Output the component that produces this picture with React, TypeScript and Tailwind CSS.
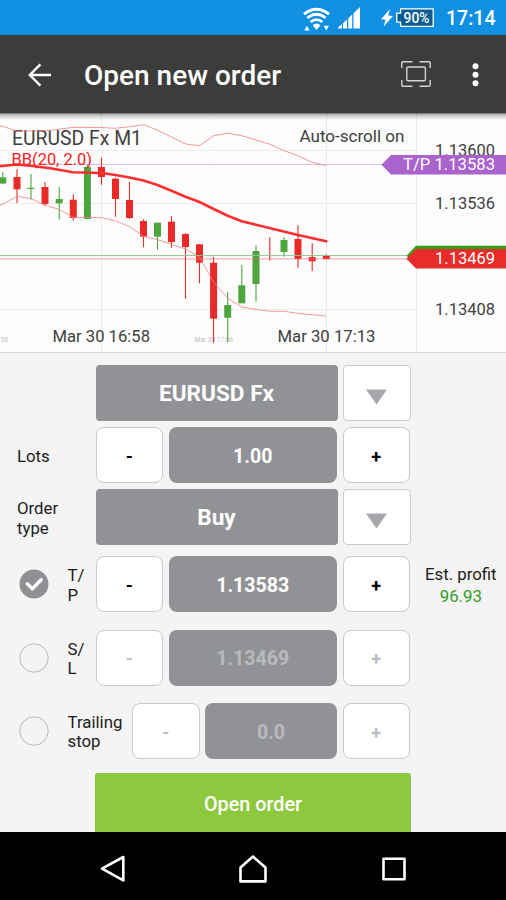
import React from 'react';

// ── Types ──────────────────────────────────────────────────────────────────
interface Candle {
  x: number;
  high: number;
  low: number;
  top: number;
  bottom: number;
  up?: boolean;
}

// ── Chart data ─────────────────────────────────────────────────────────────
const candles: Candle[] = [
  { x: 2.8, high: 172, low: 183.7, top: 177.3, bottom: 183.5, up: true },
  { x: 17, high: 169, low: 203, top: 177, bottom: 189.3 },
  { x: 31, high: 174, low: 199.5, top: 187.8, bottom: 189, up: true },
  { x: 45, high: 182, low: 206, top: 187, bottom: 204 },
  { x: 59.2, high: 187, low: 219.5, top: 199, bottom: 203.3, up: true },
  { x: 73.3, high: 194.3, low: 220.5, top: 199.7, bottom: 218 },
  { x: 87.4, high: 165, low: 219, top: 167, bottom: 219, up: true },
  { x: 101.5, high: 157.7, low: 184.7, top: 167, bottom: 177 },
  { x: 115.5, high: 177.7, low: 216.7, top: 178.7, bottom: 199 },
  { x: 129.5, high: 182, low: 219, top: 200, bottom: 218 },
  { x: 143.5, high: 219.3, low: 247.3, top: 221, bottom: 236.7 },
  { x: 157.5, high: 222.7, low: 250, top: 222.7, bottom: 236.7, up: true },
  { x: 171.5, high: 216.3, low: 247.7, top: 221.7, bottom: 242 },
  { x: 185.5, high: 233.3, low: 298.7, top: 234, bottom: 247 },
  { x: 199.5, high: 244, low: 283.3, top: 244.3, bottom: 262.7 },
  { x: 213.6, high: 256.7, low: 342.7, top: 262.7, bottom: 318.7 },
  { x: 227.7, high: 292, low: 342, top: 305, bottom: 317.7, up: true },
  { x: 241.8, high: 265, low: 303.3, top: 285.3, bottom: 303.3, up: true },
  { x: 256, high: 245.3, low: 301.3, top: 251, bottom: 284, up: true },
  { x: 269.8, high: 237.3, low: 260.7, top: 250, bottom: 250 },
  { x: 284, high: 237.3, low: 256.7, top: 240, bottom: 252, up: true },
  { x: 298, high: 225, low: 267.7, top: 239, bottom: 259 },
  { x: 312.2, high: 243.3, low: 271, top: 257, bottom: 261.3 },
  { x: 326.3, high: 254.3, low: 259.5, top: 256, bottom: 259 },
];

const upperBand =
  '0,126 3,126.3 17,131.3 50,130.5 73,127.3 101.5,127.5 115.5,128.3 129.5,126.7 143.5,124.7 157.5,130.3 171.5,137 185.5,144 199.5,145.7 213.6,135.7 227.7,133.3 241.8,135.7 255,139.7 270,144.3 284,150.7 298,155.7 312,162.3 326,165.5';
const middleBand =
  '0,166.3 17,164.5 33,166 50,168.3 73,172.2 101.5,173 115.5,175 129.5,177.5 143.5,180.5 157.5,185 171.5,190.7 185.5,196.7 199.5,202 213.6,209 227.7,215.7 241.8,221.3 256,224.7 298,234.9 327.3,241.4';
const lowerBand =
  '0,205 3,204.3 17,196.3 31,198.7 45,205.3 59,209.3 73,217.3 101.5,217.7 115.5,220.7 129.5,226.7 143.5,236.3 157.5,239.7 171.5,244.3 185.5,249 199.5,257 213.6,282.3 227.7,298.3 241.8,307 255,309.3 270,311.3 284,311.3 298,313.3 326,316';

// ── Status bar ─────────────────────────────────────────────────────────────
const StatusBar: React.FC = () => (
  <div className="flex h-[35px] items-center justify-end bg-[#118fe0] pr-[11px] text-white">
    <svg width="27" height="24" viewBox="0 0 27 24" className="mt-0.5 mr-2" fill="none" stroke="white">
      <path d="M1 7.2Q13.5-2.8 26 7.2" strokeWidth="3" />
      <path d="M4.3 11Q13.5 3.6 22.7 11" strokeWidth="2.8" />
      <path d="M7.6 14.9Q13.5 10.2 19.4 14.9" strokeWidth="2.7" />
      <path d="M9.6 18.2Q13.5 15 17.4 18.2L13.5 23z" fill="white" stroke="none" />
      <path d="M1.3 23.5l2.6-4.8 2.6 4.8zM20.7 18.7h5.2l-2.6 4.8z" fill="white" stroke="none" />
    </svg>
    <svg width="23" height="22" viewBox="0 0 23 22" className="mr-5" fill="white">
      <path d="M0 21.5v-1L4 17v4.5zM5 21.5v-5.3l4-3.8v9.1zM10.3 21.5V11.2l3.9-3.8v14.1zM15.5 21.5V6.3L22 0v21.5z" />
    </svg>
    <svg width="12" height="18" viewBox="0 0 12 18" className="mr-[3px]" fill="white">
      <path d="M9 0L0 10.2l4.6.5L2.7 17.5 12 7l-4.8-.5z" />
    </svg>
    <div className="flex items-center">
      <svg width="38" height="20" viewBox="0 0 38 20" stroke="white" strokeWidth="1.3">
        <path d="M4.6.9H37.2V18.4H4.6V14.2H.8V5.2H4.6z" fill="#0b5c91" />
        <text x="20.6" y="15.2" textAnchor="middle" textLength="26" lengthAdjust="spacingAndGlyphs" stroke="none" fill="white" className="text-[15.5px] font-medium">
          90%
        </text>
      </svg>
    </div>
    <span className="mt-[3px] ml-3 w-[49px] whitespace-nowrap text-[19.5px] leading-none font-medium">17:14</span>
  </div>
);

// ── Toolbar ────────────────────────────────────────────────────────────────
const Toolbar: React.FC = () => (
  <div className="flex h-[78px] items-center bg-[#3c3d3b] pr-[27.5px] pl-7 text-white">
    <svg width="24" height="24" viewBox="0 0 24 24" fill="none" stroke="white" strokeWidth="2.4" className="mt-px">
      <path d="M23 12H2M12.4 1.4L1.8 12l10.6 10.6" />
    </svg>
    <h1 className="mt-[3px] ml-8 grow whitespace-nowrap text-[28px] leading-none font-medium">Open new order</h1>
    <svg width="30" height="26" viewBox="0 0 30 26" fill="none" stroke="#d2d3d6" strokeWidth="1.4" className="mr-[40.5px]">
      <path d="M.8 7V2Q.8.8 2 .8H11.5M18.5.8H28Q29.2.8 29.2 2V7M29.2 19v5q0 1.2-1.2 1.2H18.5M11.5 25.2H2Q.8 25.2.8 24V19" />
      <rect x="5.8" y="6" width="18.6" height="13.8" rx="1.3" />
    </svg>
    <svg width="7" height="24" viewBox="0 0 7 24" fill="white" className="mt-px">
      <circle cx="3.5" cy="3.3" r="3" />
      <circle cx="3.5" cy="11.8" r="3" />
      <circle cx="3.5" cy="20.3" r="3" />
    </svg>
  </div>
);

// ── Chart: candlesticks with Bollinger bands and price tags ────────────────
const Chart: React.FC = () => (
  <svg width="506" height="240" viewBox="0 113 506 240" className="block bg-[#fdfdfd]">
    <defs>
      <linearGradient id="shade" x1="0" y1="0" x2="0" y2="1">
        <stop offset="0" stopColor="#000" stopOpacity="0.6" />
        <stop offset="0.25" stopColor="#000" stopOpacity="0.25" />
        <stop offset="1" stopColor="#000" stopOpacity="0" />
      </linearGradient>
    </defs>
    <g stroke="#ebebeb">
      <path d="M101.5 113V353M326.5 113V353M416.5 113V353M0 150.5H416M0 203.5H416M0 309.5H416" />
      <path d="M213.5 113V353" stroke="#f7f7f7" />
    </g>
    <path d="M0 164.5H385" stroke="#dcc0ea" strokeWidth="1.2" />
    <g fill="#404040">
      <text x="12" y="144.7" textLength="130" lengthAdjust="spacingAndGlyphs" fontSize="20">EURUSD Fx M1</text>
      <text x="299.5" y="142.3" textLength="105" lengthAdjust="spacingAndGlyphs" fontSize="17">Auto-scroll on</text>
      <text x="52.5" y="342.2" textLength="97.5" lengthAdjust="spacingAndGlyphs" fontSize="17">Mar 30 16:58</text>
      <text x="277.5" y="342.2" textLength="98" lengthAdjust="spacingAndGlyphs" fontSize="17">Mar 30 17:13</text>
      <text x="435" y="156.2" textLength="60" lengthAdjust="spacingAndGlyphs" fontSize="17">1.13600</text>
      <text x="435" y="209.4" textLength="60" lengthAdjust="spacingAndGlyphs" fontSize="17">1.13536</text>
      <text x="435" y="315.4" textLength="60" lengthAdjust="spacingAndGlyphs" fontSize="17">1.13408</text>
    </g>
    <g fill="#bdbdbd" fontSize="7">
      <text x="0.5" y="342">50</text>
      <text x="194.5" y="342" textLength="38.5" lengthAdjust="spacingAndGlyphs">Mar 30 17:06</text>
    </g>
    {candles.map((c, i) => (
      <g key={i} fill={c.up ? '#4ca63d' : '#ea2a28'} stroke={c.up ? '#4ca63d' : '#ea2a28'}>
        <path d={`M${c.x} ${c.high}V${c.low}`} strokeWidth="1.1" />
        <rect x={c.x - 3.5} y={c.top} width="7" height={c.bottom - c.top} stroke="none" />
      </g>
    ))}
    <g fill="none" stroke="#f08585" strokeWidth="0.85">
      <polyline points={upperBand} />
      <polyline points={lowerBand} />
    </g>
    <polyline points={middleBand} fill="none" stroke="#fb2f2f" strokeWidth="2.6" />
    <path d="M0 255.5H410" stroke="#8fc192" strokeWidth="0.9" />
    <path d="M0 258.9H410" stroke="#f27474" strokeOpacity="0.4" strokeWidth="1.7" />
    <text x="11.5" y="164.6" textLength="80.5" lengthAdjust="spacingAndGlyphs" fontSize="17" fill="#fa2020">BB(20, 2.0)</text>
    <path d="M381.5 164.7L391 155H506V174.5H391z" fill="#aa62cd" />
    <path d="M406.5 255.7L416 245.7H506V265H416z" fill="#2f9f1c" />
    <path d="M406.5 258.7L416 249H506V268.4H416z" fill="#e92b29" />
    <g fill="white" fontSize="17">
      <text x="403" y="170.3" textLength="92" lengthAdjust="spacingAndGlyphs">T/P 1.13583</text>
      <text x="435" y="264.4" textLength="60" lengthAdjust="spacingAndGlyphs">1.13469</text>
    </g>
    <rect x="0" y="113" width="506" height="7" fill="url(#shade)" />
    <path d="M0 353H506" stroke="#c4c4c4" strokeWidth="1.4" />
  </svg>
);

// ── Form controls ──────────────────────────────────────────────────────────
const SelectField: React.FC<{ value: string }> = ({ value }) => (
  <>
    <div className="flex h-14 w-[242px] items-center justify-center rounded-[4px] bg-[#919295] text-[22.6px] font-bold text-white">
      <span className="mt-0.5">{value}</span>
    </div>
    <div className="flex h-14 w-[67.5px] items-center justify-center rounded-[4px] border border-[#cbcbcd] bg-white">
      <svg width="21" height="16" viewBox="0 0 21 16" className="mt-[7px]" fill="#a6a7aa">
        <path d="M0 .5H21L10.5 15.5z" />
      </svg>
    </div>
  </>
);

interface StepperProps {
  value: string;
  disabled?: boolean;
  narrow?: boolean; // shorter value box, leaves room for a long label
}

const Stepper: React.FC<StepperProps> = ({ value, disabled = false, narrow = false }) => {
  const button = `flex h-14 w-[67.5px] shrink-0 items-center justify-center rounded-lg border border-[#c9c9cb] bg-white pt-[3px] text-[18px] font-bold ${
    disabled ? 'text-[#bcbdbf]' : 'text-black'
  }`;
  return (
    <>
      <div className={button}>-</div>
      <div
        className={`flex h-14 shrink-0 items-center justify-center rounded-lg bg-[#919295] pt-[3px] text-[19.6px] font-bold ${
          narrow ? 'w-[132px]' : 'w-[168.5px]'
        } ${disabled ? 'text-[#b9babc]' : 'text-white'}`}
      >
        {value}
      </div>
      <div className={button}>+</div>
    </>
  );
};

const Radio: React.FC<{ checked?: boolean }> = ({ checked = false }) => (
  <svg width="30" height="30" viewBox="0 0 30 30" className="mr-[19px] shrink-0" fill="none">
    {checked ? (
      <>
        <circle cx="15" cy="15" r="14.5" fill="#8f9093" />
        <path d="M8.3 14.8l5 5 8.9-9" stroke="white" strokeWidth="3.4" strokeLinecap="round" strokeLinejoin="round" />
      </>
    ) : (
      <circle cx="15" cy="15" r="14.2" stroke="#b9b9bb" strokeWidth="1" />
    )}
  </svg>
);

const OrderForm: React.FC = () => (
  <div className="flex h-[479px] flex-col bg-[#f4f4f4] pt-3 text-[16.8px] leading-[19.5px] text-[#1b1b1b]">
    <div className="flex gap-[5.5px] pl-[95.5px]">
      <SelectField value="EURUSD Fx" />
    </div>
    <div className="mt-1.5 flex items-center gap-[5.5px]">
      <div className="w-[90px] pt-[3px] pl-[17px]">Lots</div>
      <Stepper value="1.00" />
    </div>
    <div className="mt-1.5 flex items-center gap-[5.5px]">
      <div className="w-[90px] pt-[3px] pl-[17px]">
        Order
        <br />
        type
      </div>
      <SelectField value="Buy" />
    </div>
    <div className="mt-[11.4px] flex items-center gap-[5.5px]">
      <div className="flex w-[90px] items-center pl-[18.5px]">
        <Radio checked />
        <div className="w-5 pt-[3px]">
          T/
          <br />P
        </div>
      </div>
      <Stepper value="1.13583" />
      <div className="pt-0.5 pl-[9.5px] text-center leading-[22px] whitespace-nowrap">
        <div>Est. profit</div>
        <div className="text-[#2f9e1f]">96.93</div>
      </div>
    </div>
    <div className="mt-[17.2px] flex items-center gap-[5.5px]">
      <div className="flex w-[90px] items-center pl-[18.5px]">
        <Radio />
        <div className="w-5 pt-[3px]">
          S/
          <br />L
        </div>
      </div>
      <Stepper value="1.13469" disabled />
    </div>
    <div className="mt-[17.2px] flex items-center gap-[5.5px]">
      <div className="flex w-[126.5px] items-center pl-[18.5px]">
        <Radio />
        <div className="pt-[3px]">
          Trailing
          <br />
          stop
        </div>
      </div>
      <Stepper value="0.0" disabled narrow />
    </div>
    <div className="mt-3.5 ml-[95px] flex w-[316px] grow items-center justify-center rounded-t-[3px] bg-[#8dc83f] pt-1 text-[19.8px] font-medium text-white">
      Open order
    </div>
  </div>
);

// ── Navigation bar ─────────────────────────────────────────────────────────
const NavBar: React.FC = () => (
  <div className="flex h-[68px] items-center bg-black pt-[5px] pl-[100px]">
    <svg width="25" height="28" viewBox="0 0 25 28" fill="none" stroke="white" strokeWidth="2.6" strokeLinejoin="round">
      <path d="M23.3 2V25.4L2 13.7z" />
    </svg>
    <svg width="28" height="28" viewBox="0 0 28 28" fill="none" stroke="white" strokeWidth="2.6" strokeLinejoin="round" className="ml-[114px]">
      <path d="M1.5 26.4V12.6L14 1.6l12.5 11V26.4z" />
    </svg>
    <svg width="24" height="24" viewBox="0 0 24 24" fill="none" stroke="white" strokeWidth="2.6" strokeLinejoin="round" className="ml-[115px]">
      <rect x="1.5" y="1.7" width="21" height="20.6" />
    </svg>
  </div>
);

// ── App ────────────────────────────────────────────────────────────────────
const App: React.FC = () => (
  <div className="h-[900px] w-[506px] overflow-hidden font-['Roboto',sans-serif]">
    <StatusBar />
    <Toolbar />
    <Chart />
    <OrderForm />
    <NavBar />
  </div>
);

export default App;
